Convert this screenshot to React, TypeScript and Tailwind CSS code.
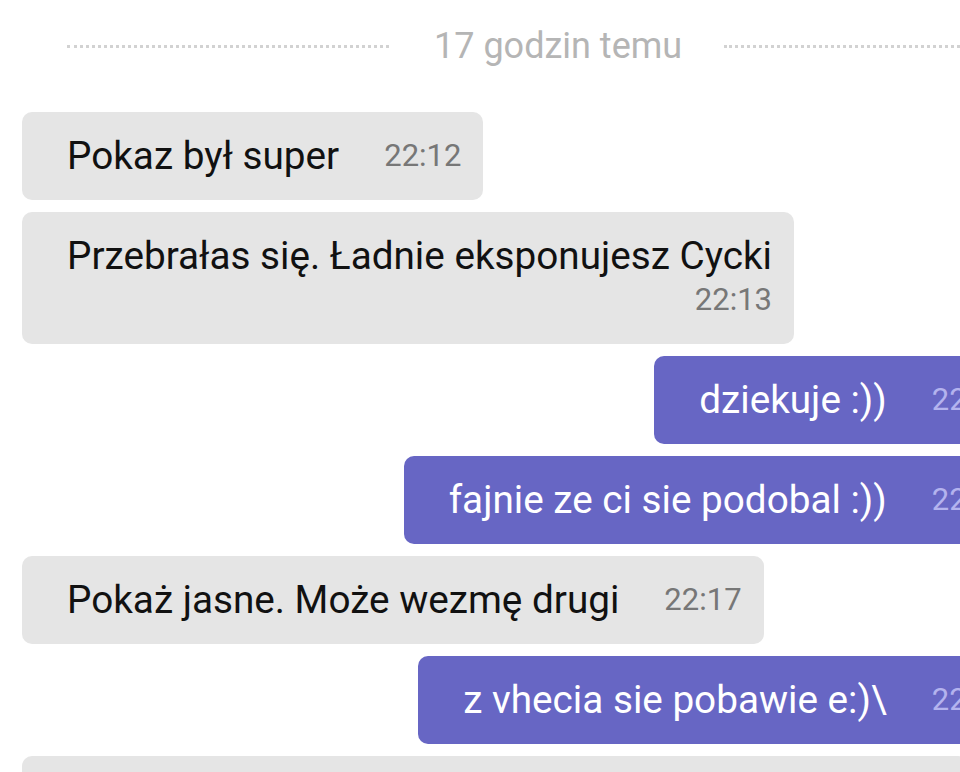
type Msg = {
  id: number;
  text: string;
  time: string;
  mine: boolean;
  stacked?: boolean;
};

const messages: Msg[] = [
  { id: 1, text: "Pokaz był super", time: "22:12", mine: false },
  { id: 2, text: "Przebrałas się. Ładnie eksponujesz Cycki", time: "22:13", mine: false, stacked: true },
  { id: 3, text: "dziekuje :))", time: "22:14", mine: true },
  { id: 4, text: "fajnie ze ci sie podobal :))", time: "22:14", mine: true },
  { id: 5, text: "Pokaż jasne. Może wezmę drugi", time: "22:17", mine: false },
  { id: 6, text: "z vhecia sie pobawie e:)\\", time: "22:18", mine: true },
  { id: 7, text: "Ok to jak będziesz miała czas to daj mi znać", time: "22:19", mine: false },
];

const Bubble = ({ msg }: { msg: Msg }) => {
  const bubble = msg.mine
    ? "bg-[#6766c4] text-white"
    : "bg-[#e5e5e5] text-[#111111]";
  const timeColor = msg.mine ? "text-[#b4b3ee]" : "text-[#777777]";

  if (msg.stacked) {
    return (
      <div className={`flex flex-col rounded-[10px] pl-[45px] pr-[22px] py-[22px] ${bubble}`}>
        <span className="text-[38.7px] leading-[44px] whitespace-nowrap">{msg.text}</span>
        <span className={`self-end text-[31px] leading-[44px] ${timeColor}`}>{msg.time}</span>
      </div>
    );
  }

  return (
    <div className={`flex items-center rounded-[10px] pl-[45px] pr-[22px] py-[22px] ${bubble}`}>
      <span className="text-[38.7px] leading-[44px] whitespace-nowrap">{msg.text}</span>
      <span className={`ml-[45px] text-[31px] leading-[44px] ${timeColor}`}>{msg.time}</span>
    </div>
  );
};

export default function App() {
  return (
    <div className="w-[960px] h-[772px] overflow-hidden bg-white font-['Roboto',sans-serif]">
      <div className="w-[1053px] px-[22px]">
        <div className="flex items-start pl-[45px] pt-[24px] h-[112px]">
          <div className="flex items-center w-full h-[44px]">
            <div className="w-[322px] border-t-[3px] border-dotted border-[#d2d2d2]" />
            <span className="ml-[45px] mr-[42px] text-[36px] text-[#b5b5b5] whitespace-nowrap">17 godzin temu</span>
            <div className="flex-1 border-t-[3px] border-dotted border-[#d2d2d2]" />
          </div>
        </div>
        <div className="flex flex-col gap-[12px]">
          {messages.map((m) => (
            <div key={m.id} className={`flex ${m.mine ? "justify-end" : "justify-start"}`}>
              <Bubble msg={m} />
            </div>
          ))}
        </div>
      </div>
    </div>
  );
}
